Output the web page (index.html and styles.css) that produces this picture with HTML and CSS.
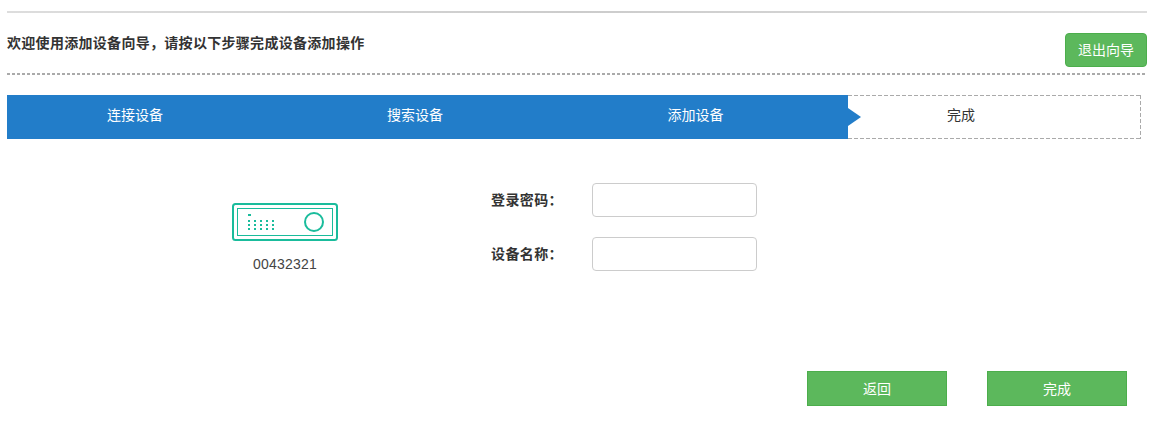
FILE: index.html
```html
<!DOCTYPE html>
<html lang="zh-CN">
<head>
  <meta charset="UTF-8">
  <title>添加设备向导</title>
  <link rel="stylesheet" href="styles.css">
</head>
<body>
<div class="wizard">
  <div class="wizard-head">
    <h2 class="wizard-title">欢迎使用添加设备向导，请按以下步骤完成设备添加操作</h2>
    <button type="button" class="btn-exit">退出向导</button>
  </div>

  <div class="steps">
    <div class="step">连接设备</div>
    <div class="step">搜索设备</div>
    <div class="step step-current">添加设备</div>
    <div class="step step-last">完成</div>
  </div>

  <div class="content">
    <div class="device">
      <svg class="device-icon" width="106" height="38" viewBox="0 0 106 38">
        <rect x="1" y="1" width="104" height="36" rx="2.5" fill="none" stroke="#1abc9c" stroke-width="2"/>
        <rect x="5.5" y="5.5" width="95" height="27" fill="none" stroke="#1abc9c"/>
        <circle cx="82" cy="19" r="9" fill="none" stroke="#1abc9c" stroke-width="2"/>
        <g fill="#1abc9c">
          <rect x="16" y="11" width="3" height="2"/>
          <rect x="16" y="17" width="2" height="2"/><rect x="22" y="17" width="2" height="2"/><rect x="28" y="17" width="2" height="2"/><rect x="34" y="17" width="2" height="2"/><rect x="40" y="17" width="2" height="2"/>
          <rect x="16" y="21" width="2" height="2"/><rect x="22" y="21" width="2" height="2"/><rect x="28" y="21" width="2" height="2"/><rect x="34" y="21" width="2" height="2"/><rect x="40" y="21" width="2" height="2"/>
          <rect x="16" y="25" width="2" height="2"/><rect x="22" y="25" width="2" height="2"/><rect x="28" y="25" width="2" height="2"/><rect x="34" y="25" width="2" height="2"/><rect x="40" y="25" width="2" height="2"/>
        </g>
      </svg>
      <div class="device-id">00432321</div>
    </div>

    <form class="device-form">
      <div class="form-row">
        <label class="form-label" for="password">登录密码：</label>
        <input class="form-input" type="password" id="password">
      </div>
      <div class="form-row">
        <label class="form-label" for="device-name">设备名称：</label>
        <input class="form-input" type="text" id="device-name">
      </div>
    </form>
  </div>

  <div class="actions">
    <button type="button" class="btn-action">返回</button>
    <button type="button" class="btn-action">完成</button>
  </div>
</div>
</body>
</html>
```

FILE: styles.css
```css
body {
  margin: 0;
  background: #fff;
  color: #333;
  font-family: "Liberation Sans", "Noto Sans CJK SC", sans-serif;
  font-size: 14px;
}

.wizard {
  width: 1140px;
  margin-left: 7px;
  padding-top: 11px;
}

.wizard-head {
  display: flex;
  justify-content: space-between;
  height: 64px;
  background:
    linear-gradient(to right, #ddd, #ccc 50%, #ddd) top / 100% 2px no-repeat,
    repeating-linear-gradient(to right, #aaa 0 3px, transparent 3px 5px) bottom / 100% 2px no-repeat;
}

.wizard-title {
  margin: 22px 0 0;
  font-size: 14px;
  line-height: 20px;
  font-weight: bold;
  letter-spacing: 0.3px;
}

.btn-exit {
  width: 82px;
  height: 34px;
  margin-top: 22px;
  padding: 0 0 2px;
  background-color: #5cb85c;
  border: 1px solid #4cae4c;
  border-radius: 4px;
  color: #fff;
  font-family: inherit;
  font-size: 14px;
}

.steps {
  display: flex;
  width: 1134px;
  height: 44px;
  margin-top: 20px;
  line-height: 40px;
}

.step {
  position: relative;
  width: 256px;
  padding-right: 24px;
  background-color: #227dc9;
  color: #fff;
  text-align: center;
}

.step-current {
  width: 257px;
}

.step-current::after {
  content: "";
  position: absolute;
  left: 100%;
  top: 13px;
  border-left: 13px solid #227dc9;
  border-top: 9px solid transparent;
  border-bottom: 9px solid transparent;
}

.step-last {
  flex: 1;
  padding-right: 67px;
  background:
    repeating-linear-gradient(to right, #aaa 0 4px, transparent 4px 6px) top / 100% 1px no-repeat,
    repeating-linear-gradient(to right, #aaa 0 4px, transparent 4px 6px) bottom / 100% 1px no-repeat,
    repeating-linear-gradient(to bottom, #aaa 0 4px, transparent 4px 6px) right / 1px 100% no-repeat;
  color: #333;
}

.content {
  display: flex;
  height: 232px;
}

.device {
  width: 556px;
  padding-top: 64px;
  text-align: center;
}

.device-icon {
  display: block;
  margin-left: 225px;
}

.device-id {
  margin-top: 13px;
  line-height: 20px;
  letter-spacing: 0.2px;
  color: #444;
}

.device-form {
  padding-top: 44px;
}

.form-row {
  display: flex;
  align-items: center;
  height: 34px;
  margin-bottom: 20px;
}

.form-label {
  width: 101px;
  margin-left: -72px;
  padding-bottom: 2px;
  font-weight: bold;
  letter-spacing: 0.4px;
}

.form-input {
  box-sizing: border-box;
  width: 165px;
  height: 34px;
  padding: 6px 12px;
  background: #fff;
  border: 1px solid #ccc;
  border-radius: 4px;
}

.actions {
  display: flex;
  justify-content: flex-end;
  gap: 40px;
  padding-right: 20px;
}

.btn-action {
  width: 140px;
  height: 35px;
  padding: 0 0 2px;
  background-color: #5cb85c;
  border: 1px solid #4cae4c;
  color: #fff;
  font-family: inherit;
  font-size: 14px;
}
```
